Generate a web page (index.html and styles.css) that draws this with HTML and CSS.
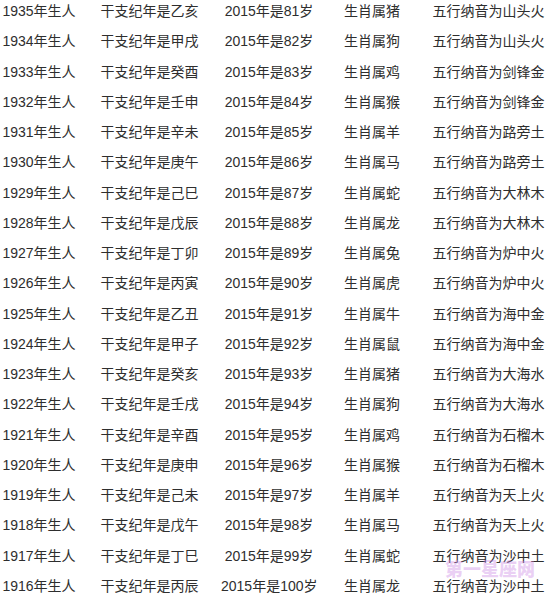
FILE: index.html
```html
<!DOCTYPE html>
<html lang="zh">
<head>
<meta charset="utf-8">
<link rel="stylesheet" href="styles.css">
</head>
<body>
<div class="page">
<table class="years">
<colgroup><col class="c1"><col class="c2"><col class="c3"><col class="c4"><col class="c5"></colgroup>
<tbody>
<tr><td>1935年生人</td><td>干支纪年是乙亥</td><td>2015年是81岁</td><td>生肖属猪</td><td>五行纳音为山头火</td></tr>
<tr><td>1934年生人</td><td>干支纪年是甲戌</td><td>2015年是82岁</td><td>生肖属狗</td><td>五行纳音为山头火</td></tr>
<tr><td>1933年生人</td><td>干支纪年是癸酉</td><td>2015年是83岁</td><td>生肖属鸡</td><td>五行纳音为剑锋金</td></tr>
<tr><td>1932年生人</td><td>干支纪年是壬申</td><td>2015年是84岁</td><td>生肖属猴</td><td>五行纳音为剑锋金</td></tr>
<tr><td>1931年生人</td><td>干支纪年是辛未</td><td>2015年是85岁</td><td>生肖属羊</td><td>五行纳音为路旁土</td></tr>
<tr><td>1930年生人</td><td>干支纪年是庚午</td><td>2015年是86岁</td><td>生肖属马</td><td>五行纳音为路旁土</td></tr>
<tr><td>1929年生人</td><td>干支纪年是己巳</td><td>2015年是87岁</td><td>生肖属蛇</td><td>五行纳音为大林木</td></tr>
<tr><td>1928年生人</td><td>干支纪年是戊辰</td><td>2015年是88岁</td><td>生肖属龙</td><td>五行纳音为大林木</td></tr>
<tr><td>1927年生人</td><td>干支纪年是丁卯</td><td>2015年是89岁</td><td>生肖属兔</td><td>五行纳音为炉中火</td></tr>
<tr><td>1926年生人</td><td>干支纪年是丙寅</td><td>2015年是90岁</td><td>生肖属虎</td><td>五行纳音为炉中火</td></tr>
<tr><td>1925年生人</td><td>干支纪年是乙丑</td><td>2015年是91岁</td><td>生肖属牛</td><td>五行纳音为海中金</td></tr>
<tr><td>1924年生人</td><td>干支纪年是甲子</td><td>2015年是92岁</td><td>生肖属鼠</td><td>五行纳音为海中金</td></tr>
<tr><td>1923年生人</td><td>干支纪年是癸亥</td><td>2015年是93岁</td><td>生肖属猪</td><td>五行纳音为大海水</td></tr>
<tr><td>1922年生人</td><td>干支纪年是壬戌</td><td>2015年是94岁</td><td>生肖属狗</td><td>五行纳音为大海水</td></tr>
<tr><td>1921年生人</td><td>干支纪年是辛酉</td><td>2015年是95岁</td><td>生肖属鸡</td><td>五行纳音为石榴木</td></tr>
<tr><td>1920年生人</td><td>干支纪年是庚申</td><td>2015年是96岁</td><td>生肖属猴</td><td>五行纳音为石榴木</td></tr>
<tr><td>1919年生人</td><td>干支纪年是己未</td><td>2015年是97岁</td><td>生肖属羊</td><td>五行纳音为天上火</td></tr>
<tr><td>1918年生人</td><td>干支纪年是戊午</td><td>2015年是98岁</td><td>生肖属马</td><td>五行纳音为天上火</td></tr>
<tr><td>1917年生人</td><td>干支纪年是丁巳</td><td>2015年是99岁</td><td>生肖属蛇</td><td>五行纳音为沙中土</td></tr>
<tr><td>1916年生人</td><td>干支纪年是丙辰</td><td>2015年是100岁</td><td>生肖属龙</td><td>五行纳音为沙中土</td></tr>
</tbody>
</table>
<div class="watermark">第一星座网</div>
</div>
</body>
</html>
```
FILE: styles.css
```css
html, body {
  margin: 0;
  padding: 0;
  background: #ffffff;
}
.page {
  position: relative;
  width: 550px;
  height: 600px;
  overflow: hidden;
}
.years {
  table-layout: fixed;
  border-collapse: collapse;
  width: 550px;
  font-family: "Liberation Sans", "Noto Sans CJK SC", sans-serif;
  font-size: 14px;
  color: #2e2e2e;
}
.c1 { width: 78px; }
.c2 { width: 143px; }
.c3 { width: 96px; }
.c4 { width: 110px; }
.c5 { width: 123px; }
.years td {
  padding: 0 0 8.25px 0;
  height: 22px;
  line-height: 22px;
  text-align: center;
  white-space: nowrap;
  vertical-align: top;
}
.watermark {
  position: absolute;
  left: 445px;
  top: 556px;
  font-family: "Noto Sans CJK SC", sans-serif;
  font-weight: 900;
  font-size: 18px;
  line-height: 24px;
  color: rgba(205, 140, 230, 0.42);
}
```
